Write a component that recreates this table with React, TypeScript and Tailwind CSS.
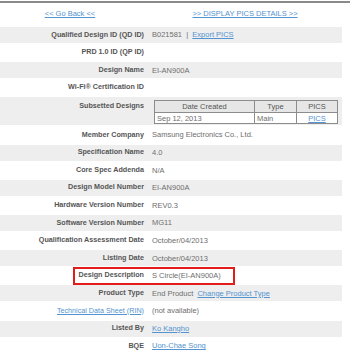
import React from "react";

const LINK = "text-[#5393cf] underline";

type Row = { label: React.ReactNode; value: React.ReactNode; boxed?: boolean };

const rows: Row[] = [
  { label: "Qualified Design ID (QD ID)", value: (<span>B021581 &nbsp;|&nbsp; <a className={LINK}>Export PICS</a></span>) },
  { label: "PRD 1.0 ID (QP ID)", value: "" },
  { label: "Design Name", value: "EI-AN900A" },
  { label: "Wi-Fi® Certification ID", value: "" },
];

const rows2: Row[] = [
  { label: "Member Company", value: "Samsung Electronics Co., Ltd." },
  { label: "Specification Name", value: "4.0" },
  { label: "Core Spec Addenda", value: "N/A" },
  { label: "Design Model Number", value: "EI-AN900A" },
  { label: "Hardware Version Number", value: "REV0.3" },
  { label: "Software Version Number", value: "MG11" },
  { label: "Qualification Assessment Date", value: "October/04/2013" },
  { label: "Listing Date", value: "October/04/2013" },
  { label: "Design Description", value: "S Circle(EI-AN900A)", boxed: true },
  { label: "Product Type", value: (<span>End Product &nbsp;<a className={LINK}>Change Product Type</a></span>) },
  { label: <a className={LINK + " font-normal"}>Technical Data Sheet (RIN)</a>, value: "(not available)" },
  { label: "Listed By", value: <a className={LINK}>Ko Kangho</a> },
  { label: "BQE", value: <a className={LINK}>Uon-Chae Song</a> },
];

function RowView({ r, gray }: { r: Row; gray: boolean }) {
  return (
    <div className={`relative flex w-[342px] h-[16px] items-center shrink-0 ${gray ? "bg-[#eeeeee]" : "bg-white"}`}>
      <div className="w-[148px] pr-[4px] text-right text-[7.2px] font-bold text-[#555] whitespace-nowrap">{r.label}</div>
      <div className="pl-[4px] text-[7.5px] text-[#6e6e6e] whitespace-nowrap">{r.value}</div>
      {r.boxed && (
        <div className="absolute left-[73px] top-[-1px] w-[162px] h-[18px] border-2 border-[#e21b1b]" />
      )}
    </div>
  );
}

export default function App() {
  return (
    <div className="w-[350px] h-[350px] overflow-hidden bg-white font-['Liberation_Sans',Arial,sans-serif]">
      <div className="mt-[1px] h-[2px] bg-[#8a8a8a]" />
      <div className="flex w-[342px] h-[24px] pt-[5px] text-[7.5px]">
        <div className="w-[148px] pr-[8px] text-center"><a className={LINK}>&lt;&lt; Go Back &lt;&lt;</a></div>
        <div className="w-[194px] text-center"><a className={LINK}>&gt;&gt; DISPLAY PICS DETAILS &gt;&gt;</a></div>
      </div>
      <div className="flex flex-col gap-[1.6px]">
        {rows.map((r, i) => (
          <RowView key={i} r={r} gray={i % 2 === 0} />
        ))}
        <div className="flex w-[342px] h-[28px] bg-[#eeeeee] shrink-0">
          <div className="w-[148px] pr-[4px] pt-[4px] text-right text-[7.2px] font-bold text-[#555] whitespace-nowrap">Subsetted Designs</div>
          <div className="pl-[6px] pt-[3px]">
            <div className="w-[184px] border border-[#8c8c8c] bg-white text-[7.5px] text-[#6e6e6e]">
              <div className="flex h-[12px] bg-[#e6e6e6] border-b border-[#8c8c8c] items-center text-[#555]">
                <div className="w-[100px] h-full flex items-center justify-center border-r border-[#8c8c8c]">Date Created</div>
                <div className="w-[42px] h-full flex items-center justify-center border-r border-[#8c8c8c]">Type</div>
                <div className="flex-1 h-full flex items-center justify-center">PICS</div>
              </div>
              <div className="flex h-[10px] items-center">
                <div className="w-[100px] h-full flex items-center pl-[2px] border-r border-[#8c8c8c]">Sep 12, 2013</div>
                <div className="w-[42px] h-full flex items-center pl-[2px] border-r border-[#8c8c8c]">Main</div>
                <div className="flex-1 h-full flex items-center justify-center"><a className={LINK}>PICS</a></div>
              </div>
            </div>
          </div>
        </div>
        {rows2.map((r, i) => (
          <RowView key={i} r={r} gray={i % 2 === 1} />
        ))}
      </div>
    </div>
  );
}
